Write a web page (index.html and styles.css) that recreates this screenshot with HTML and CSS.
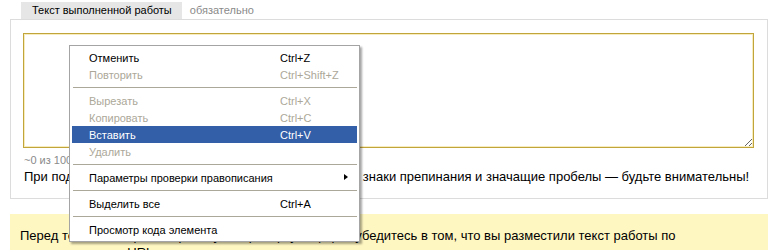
FILE: index.html
```html
<!DOCTYPE html>
<html lang="ru">
<head>
<meta charset="utf-8">
<link rel="stylesheet" href="styles.css">
</head>
<body>
<div class="page">
  <div class="tabs">
    <span class="tab">Текст выполненной работы</span>
    <span class="req">обязательно</span>
  </div>
  <div class="box">
    <textarea class="area"></textarea>
    <div class="counter">~0 из 1000</div>
    <div class="note">При подсчёте учитываются все символы, в том числе и знаки препинания и значащие пробелы — будьте внимательны!</div>
  </div>
  <div class="warn">Перед тем, как отправить работу на проверку, ещё раз убедитесь в том, что вы разместили текст работы по указанному вами URL, точно проверьте идентичность текстов.</div>
</div>

<div class="menu">
  <div class="item"><span class="label">Отменить</span><span class="key">Ctrl+Z</span></div>
  <div class="item off"><span class="label">Повторить</span><span class="key">Ctrl+Shift+Z</span></div>
  <div class="sep"></div>
  <div class="item off"><span class="label">Вырезать</span><span class="key">Ctrl+X</span></div>
  <div class="item off"><span class="label">Копировать</span><span class="key">Ctrl+C</span></div>
  <div class="item hot"><span class="label">Вставить</span><span class="key">Ctrl+V</span></div>
  <div class="item off"><span class="label">Удалить</span><span class="key"></span></div>
  <div class="sep"></div>
  <div class="item"><span class="label">Параметры проверки правописания</span><span class="key"></span><span class="arrow"></span></div>
  <div class="sep"></div>
  <div class="item"><span class="label">Выделить все</span><span class="key">Ctrl+A</span></div>
  <div class="sep"></div>
  <div class="item"><span class="label">Просмотр кода элемента</span><span class="key"></span></div>
</div>
</body>
</html>
```

FILE: styles.css
```css
html, body {
  margin: 0;
  padding: 0;
  background: #fff;
  overflow: hidden;
}

body {
  font-family: "Liberation Sans", Arial, sans-serif;
  color: #000;
  width: 777px;
  height: 250px;
  position: relative;
}

.page {
  padding: 2px 9px 0 10px;
}

.tabs {
  display: flex;
  align-items: center;
  height: 17px;
  padding-left: 11px;
  font-size: 11px;
}

.tab {
  background: #e6e6e6;
  height: 17px;
  line-height: 17px;
  padding: 0 10px 0 11px;
  color: #000;
}

.req {
  color: #8a8a8a;
  margin-left: 8px;
  line-height: 17px;
}

.box {
  border: 1px solid #dcdcdc;
  padding: 13px 14px 12px 12px;
}

.area {
  display: block;
  box-sizing: border-box;
  width: 731px;
  height: 115px;
  margin: 0;
  border: 1px solid #c2a53a;
  box-shadow: inset 0 0 0 1px #f6ecc0;
  background: #fff;
  outline: none;
  resize: both;
}

.counter {
  font-size: 11px;
  color: #8a8a8a;
  margin-top: 5px;
  line-height: 14px;
  padding-left: 1px;
}

.note {
  font-size: 13px;
  line-height: 18px;
  margin-top: 1px;
  padding-left: 1px;
  white-space: nowrap;
}

.warn {
  margin-top: 15px;
  background: #fff7c2;
  padding: 13px 60px 0 10px;
  font-size: 13px;
  line-height: 17px;
}

.menu {
  position: absolute;
  left: 69px;
  top: 45px;
  width: 291px;
  box-sizing: border-box;
  background: #fff;
  border: 1px solid #a4a4a4;
  padding: 3px 2px;
  box-shadow: 2px 2px 2px rgba(0, 0, 0, 0.35);
  font-size: 11px;
  z-index: 10;
}

.item {
  display: flex;
  align-items: center;
  height: 17px;
  padding-left: 17px;
  position: relative;
  color: #000;
}

.item .label {
  width: 191px;
}

.item .key {
  flex: 1;
}

.item.off {
  color: #aca899;
}

.item.hot {
  background: #335ea8;
  color: #fff;
}

.sep {
  height: 1px;
  background: #aca899;
  margin: 4px 0 4px 1px;
}

.arrow {
  position: absolute;
  right: 9px;
  top: 5px;
  width: 0;
  height: 0;
  border-top: 3.5px solid transparent;
  border-bottom: 3.5px solid transparent;
  border-left: 4px solid #000;
}
```
